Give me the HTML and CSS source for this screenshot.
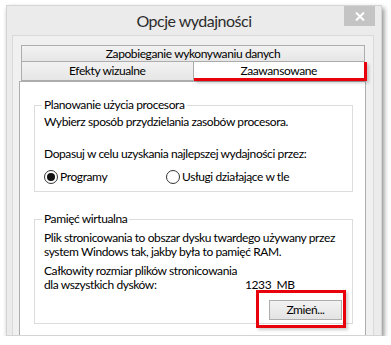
FILE: index.html
```html
<!DOCTYPE html>
<html lang="pl">
<head>
  <meta charset="UTF-8" />
  <title>Opcje wydajności</title>
  <link rel="stylesheet" href="styles.css">
</head>
<body>
  <div class="window">
    <div class="titlebar">
      <span></span>
      <h1 class="title">Opcje wydajności</h1>
      <button class="close" aria-label="Zamknij">
        <svg width="10" height="9" viewBox="0 0 10 9">
          <path d="M1 0.5 L9 8.5 M9 0.5 L1 8.5" stroke="#fff" stroke-width="2" />
        </svg>
      </button>
    </div>

    <div class="client">
      <div class="tabs">
        <div class="tab-row">
          <div class="tab">Zapobieganie wykonywaniu danych</div>
        </div>
        <div class="tab-row">
          <div class="tab">Efekty wizualne</div>
          <div class="tab active">Zaawansowane</div>
        </div>
      </div>

      <div class="panel">
        <fieldset class="group group-cpu">
          <legend>Planowanie użycia procesora</legend>
          <p>Wybierz sposób przydzielania zasobów procesora.</p>
          <p class="gap">Dopasuj w celu uzyskania najlepszej wydajności przez:</p>
          <div class="radios">
            <label class="radio first"><span class="dot checked"></span>Programy</label>
            <label class="radio"><span class="dot"></span>Usługi działające w tle</label>
          </div>
        </fieldset>

        <fieldset class="group group-mem">
          <legend>Pamięć wirtualna</legend>
          <p>Plik stronicowania to obszar dysku twardego używany przez<br>system Windows tak, jakby była to pamięć RAM.</p>
          <div class="total">
            <p>Całkowity rozmiar plików stronicowania<br>dla wszystkich dysków:</p>
            <span class="size">1233&nbsp; MB</span>
          </div>
          <div class="actions">
            <span class="highlight">
              <button class="btn">Zmień...</button>
            </span>
          </div>
        </fieldset>
      </div>
    </div>
  </div>
</body>
</html>
```

FILE: styles.css
```css
* {
  box-sizing: border-box;
}

body {
  margin: 0;
  background: #ffffff;
  font-family: Lato, 'Noto Sans', sans-serif;
  font-size: 12px;
  letter-spacing: -0.4px;
  color: #000;
  white-space: nowrap;
}

.window {
  margin: 5px 0 0 6px;
  width: 376px;
  height: 331px;
  background: #ebebeb;
  border: 1px solid #d4d4d4;
  box-shadow: 2px 3px 5px rgba(0, 0, 0, 0.45);
  display: flex;
  flex-direction: column;
}

.titlebar {
  height: 29px;
  display: grid;
  grid-template-columns: 1fr auto 1fr;
  align-items: start;
}

.title {
  margin: 4px 0 0;
  font-size: 16px;
  font-weight: normal;
  color: #2b2b2b;
  line-height: 22px;
  letter-spacing: -0.5px;
}

.close {
  justify-self: end;
  margin-right: 6px;
  width: 31px;
  height: 20px;
  border: none;
  padding: 0;
  background: #c4c4c4;
  display: flex;
  align-items: center;
  justify-content: center;
}

.client {
  flex: 1;
  margin: 0 7px 0 5px;
  background: #f0f0f0;
  border: 1px solid #dadada;
  border-bottom: none;
  padding: 9px 7px 0 6px;
  display: flex;
  flex-direction: column;
}

.tabs {
  margin: 0 1px 0 2px;
}

.tab-row {
  display: flex;
}

.tab {
  flex: 1;
  height: 17px;
  line-height: 15px;
  text-align: center;
  border: 1px solid #adadad;
  background: linear-gradient(#f2f2f2, #e6e6e6);
  color: #000;
}

.tab-row + .tab-row .tab {
  height: 19px;
  line-height: 17px;
  border-top: none;
}

.tab-row + .tab-row .tab + .tab {
  border-left: none;
}

.tab.active {
  background: #fff;
  border: 3px solid #e8000b;
  line-height: 13px;
  margin-right: -2px;
  box-shadow: 2px 2px 3px rgba(0, 0, 0, 0.2);
  position: relative;
  z-index: 1;
}

.panel {
  flex: 1;
  background: #fff;
  border: 1px solid #adadad;
  border-bottom: none;
  padding: 15px 12px 0 14px;
}

.group {
  margin: 0;
  min-width: 0;
  border: 1px solid #dcdcdc;
  padding: 0 9px;
  line-height: 14px;
}

.group legend {
  padding: 0 2px;
  margin-left: -2px;
  line-height: 16px;
}

.group p {
  margin: 0;
}

.group-cpu {
  height: 95px;
  padding-top: 2px;
}

.group-cpu .gap {
  margin-top: 18px;
}

.radios {
  display: flex;
  margin-top: 9px;
}

.radio {
  display: flex;
  align-items: center;
  gap: 2px;
}

.radio.first {
  width: 122px;
}

.dot {
  width: 14px;
  height: 14px;
  border: 1px solid #333;
  border-radius: 50%;
  background: #fff;
  display: flex;
  align-items: center;
  justify-content: center;
}

.dot.checked::after {
  content: "";
  width: 8px;
  height: 8px;
  border-radius: 50%;
  background: #111;
}

.group-mem {
  margin-top: 19px;
  height: 113px;
  padding-top: 4px;
}

.total {
  display: flex;
  align-items: flex-end;
  margin-top: 5px;
}

.total p {
  width: 201px;
}

.actions {
  display: flex;
  justify-content: flex-end;
  margin-top: -2px;
  margin-right: -3px;
}

.highlight {
  border: 3px solid #e8000b;
  padding: 7px 1px 5px 10px;
  box-shadow: 2px 2px 3px rgba(0, 0, 0, 0.2);
}

.btn {
  display: block;
  width: 73px;
  height: 20px;
  padding: 0;
  font: inherit;
  letter-spacing: inherit;
  color: #000;
  border: 1px solid #adadad;
  background: linear-gradient(#f2f2f2, #e3e3e3);
}
```
